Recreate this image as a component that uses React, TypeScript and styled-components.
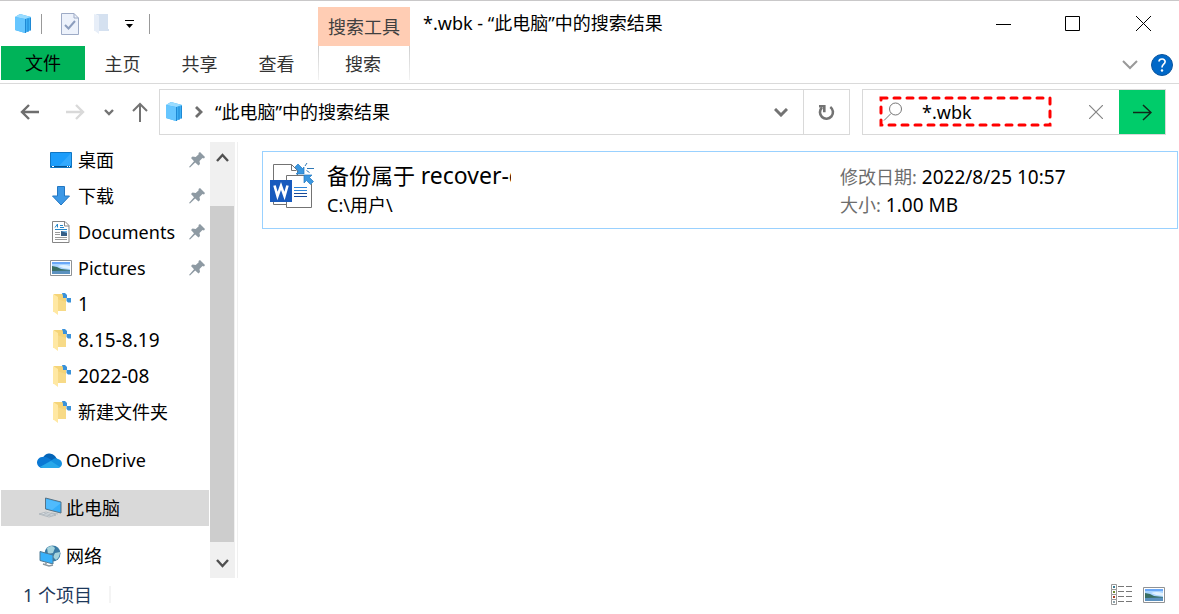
import React from "react";
import styled, { createGlobalStyle } from "styled-components";

const GlobalStyle = createGlobalStyle`
  *, *::before, *::after { box-sizing: border-box; }
  body { margin: 0; background: #fff; }
  body, button, input {
    font-family: "Noto Sans", "Noto Sans CJK SC", sans-serif;
    font-size: 18px;
    line-height: 24px;
    color: #000;
  }
  button { border: 0; padding: 0; background: none; }
  svg { display: block; flex: none; }
`;

const Window = styled.div`
  display: flex;
  flex-direction: column;
  min-height: 100vh;
  background: #fff;
  border-top: 1px solid #c9c8c9;
`;

const TitleBar = styled.header`
  display: flex;
  height: 45px;
`;

const QuickAccess = styled.div`
  display: flex;
  align-items: center;
  width: 318px;
  height: 46px;
  padding-left: 14px;
`;

const Divider = styled.span<{ $before: number; $after: number }>`
  width: 1px;
  height: 20px;
  margin: 0 ${(p) => p.$after}px 0 ${(p) => p.$before}px;
  background: #999;
`;

const IconButton = styled.button<{ $width: number }>`
  display: flex;
  align-items: center;
  justify-content: center;
  flex: none;
  width: ${(p) => p.$width}px;
  align-self: stretch;
`;

const ContextLabel = styled.div`
  width: 92px;
  margin-top: 6px;
  background: #ffcdb4;
  color: #404040;
  text-align: center;
  line-height: 40px;
`;

const Title = styled.h1`
  flex: 1;
  margin: 0;
  padding-left: 13px;
  font-size: 18px;
  font-weight: 400;
  line-height: 44px;
  white-space: nowrap;
`;

const WindowControls = styled.div`
  display: flex;
`;

const TabBar = styled.nav`
  display: flex;
  height: 38px;
  padding: 0 4px 0 1px;
  border-bottom: 1px solid #dadada;
`;

const Tab = styled.button<{ $kind?: "file" | "context" }>`
  width: ${(p) => (p.$kind === "file" ? 84 : p.$kind === "context" ? 92 : 77)}px;
  height: 34px;
  margin-left: ${(p) => (p.$kind === "context" ? 2 : 0)}px;
  padding: ${(p) => (p.$kind === "file" ? "0" : "2px 2px 0 0")};
  background: ${(p) => (p.$kind === "file" ? "#00b359" : "#fff")};
  color: ${(p) => (p.$kind === "file" ? "#000" : "#333")};
  border-style: solid;
  border-color: #d4d4d4;
  border-width: ${(p) => (p.$kind === "context" ? "0 1px" : "0")};
  border-image: ${(p) => (p.$kind === "context" ? "linear-gradient(#ccc, #f4f4f4) 1" : "none")};
`;

const Spacer = styled.span`
  flex: 1;
`;

const AddressRow = styled.div`
  display: flex;
  padding: 5px 13px 6px 12px;
`;

const NavButtons = styled.div`
  display: flex;
  width: 147px;
`;

const AddressBox = styled.div`
  display: flex;
  flex: 1;
  align-items: center;
  height: 46px;
  padding-left: 5px;
  border: 1px solid #d9d9d9;
`;

const Crumb = styled.a`
  color: #000;
  text-decoration: none;
  white-space: nowrap;
`;

const RefreshCell = styled.div`
  display: flex;
  align-self: stretch;
  border-left: 1px solid #d9d9d9;
`;

const SearchBox = styled.form`
  position: relative;
  display: flex;
  align-items: center;
  width: 304px;
  height: 46px;
  margin-left: 12px;
  padding-left: 20px;
  border: 1px solid #d9d9d9;
`;

const SearchInput = styled.input`
  flex: 1;
  min-width: 0;
  padding: 0 0 0 19px;
  border: 0;
  outline: 0;
  background: none;
`;

const Highlight = styled.svg`
  position: absolute;
  left: 16px;
  top: 6px;
  pointer-events: none;
`;

const GoButton = styled(IconButton)`
  background: #00cc6a;
`;

const Body = styled.div`
  display: flex;
  flex: 1;
  padding-top: 1px;
`;

const Sidebar = styled.nav`
  width: 210px;
  padding: 0 1px 4px;
`;

const Group = styled.ul`
  margin: 0 0 12px;
  padding: 0;
  list-style: none;

  &:last-child { margin-bottom: 0; }
`;

const Item = styled.a<{ $root?: boolean; $selected?: boolean }>`
  display: flex;
  align-items: center;
  gap: ${(p) => (p.$root ? 4 : 6)}px;
  height: 36px;
  padding: 0 4px 0 ${(p) => (p.$root ? 36 : 49)}px;
  background: ${(p) => (p.$selected ? "#d9d9d9" : "transparent")};
  color: #000;
  text-decoration: none;
  white-space: nowrap;
`;

const ItemLabel = styled.span<{ $numeric?: boolean }>`
  flex: 1;
  font-size: ${(p) => (p.$numeric ? 19 : 18)}px;
`;

const ScrollBar = styled.div`
  display: flex;
  flex-direction: column;
  width: 25px;
  background: #f0f0f0;
`;

const ScrollButton = styled.button`
  display: flex;
  align-items: center;
  justify-content: center;
  height: 30px;
`;

const ScrollTrack = styled.div`
  display: flex;
  flex: 1;
  padding: 34px 1px 6px 0;
`;

const ScrollThumb = styled.div`
  flex: 1;
  background: #cdcdcd;
`;

const Results = styled.main`
  flex: 1;
  margin-left: 2px;
  padding: 9px 1px 0 24px;
  border-left: 1px solid #f0f0f0;
`;

const Result = styled.article`
  display: flex;
  height: 78px;
  padding: 10px 7px;
  border: 1px solid #99d1ff;
`;

const FileInfo = styled.div`
  flex: 1;
  padding-left: 13px;
`;

const FileName = styled.h2`
  width: 184px;
  height: 28px;
  margin: 0;
  overflow-x: clip;
  overflow-y: visible;
  font-size: 22px;
  font-weight: 400;
  line-height: 26px;
  white-space: nowrap;
`;

const LatinName = styled.span`
  font-size: 23px;
`;

const FilePath = styled.p`
  margin: 0;
  line-height: 30px;
`;

const Details = styled.dl`
  width: 330px;
  margin: 0;
  padding-top: 1px;
`;

const Detail = styled.div`
  display: flex;
  gap: 5px;
  line-height: 28px;

  dt { color: #6d6d6d; }
  dd { margin: 0; font-size: 19px; }
`;

const StatusBar = styled.footer`
  display: flex;
  align-items: center;
  height: 37px;
  padding: 0 7px 4px 23px;
  color: #1e395b;
`;

const StatusDivider = styled.span`
  width: 2px;
  height: 17px;
  margin-left: 17px;
  background: #f4f4f4;
`;

const LibraryIcon = () => (
  <svg width="18" height="22" viewBox="0 0 18 22">
    <path d="M1 4 6 1l11 3v13l-6 3-10-3z" fill="#3db0f5" />
    <path d="M1 4 6 1l11 3-6 2z" fill="#9adcff" />
    <path d="M1 4l10 2v14L1 17z" fill="#66c6ff" />
    <path d="M11.500 6v14M14 5.500v13.500M16.500 5v12.500" stroke="#1c85d0" strokeWidth=".9" />
  </svg>
);

const CheckPageIcon = () => (
  <svg width="18" height="22" viewBox="0 0 18 22" fill="none">
    <path d="M.5 .5h12.500l4.500 4.500v16.500H.5z" fill="#edf2fb" stroke="#9eabc6" />
    <path d="M13 .5v4.500h4.500" stroke="#9eabc6" />
    <path d="m4 12 3.500 3.500L14 8" stroke="#8c9dbd" strokeWidth="2" />
  </svg>
);

const PaleFolderIcon = () => (
  <svg width="15" height="22" viewBox="0 0 15 22">
    <path d="M1 1h13v15h1v2H5V3z" fill="#d5e1f0" />
    <path d="M0 1l5 2v18l-4-3H0z" fill="#e7eef8" />
  </svg>
);

const CustomizeIcon = () => (
  <svg width="9" height="8" viewBox="0 0 9 8">
    <path d="M0 .5h9" stroke="#000" />
    <path d="M1 4h7L4.500 8z" />
  </svg>
);

const Stroke = ({ w, h, d, color, width = 1 }: { w: number; h: number; d: string; color: string; width?: number }) => (
  <svg width={w} height={h} viewBox={`0 0 ${w} ${h}`} fill="none" stroke={color} strokeWidth={width}>
    <path d={d} />
  </svg>
);

const HelpIcon = () => (
  <svg width="22" height="22" viewBox="0 0 22 22">
    <circle cx="11" cy="11" r="10.500" fill="#0068c8" stroke="#0b559e" />
    <path d="M8 7.500C8.300 4 14.300 4.300 14.100 7.800 14 10.300 11 10.300 11 13.500" fill="none" stroke="#fff" strokeWidth="1.700" />
    <circle cx="11" cy="16.500" r="1.200" fill="#fff" />
  </svg>
);

const RefreshIcon = () => (
  <svg width="17" height="17" viewBox="0 0 17 17" fill="none" stroke="#737373" strokeWidth="2.600">
    <path d="M12.300 3A6.500 6.500 0 1 1 4 3.500" />
    <path d="M1 2.200h5.300v6" />
  </svg>
);

const DesktopIcon = () => (
  <svg width="22" height="16" viewBox="0 0 22 16">
    <path d="M.5 .5h21v15H.5z" fill="#1c9dfb" stroke="#0f76c4" />
    <path d="M21 1v12L9 14z" fill="#42b0ff" opacity=".6" />
    <path d="M1 14.500h20" stroke="#07518c" />
    <path d="M2 14.500h2M17 14.500h1M19 14.500h1" stroke="#fff" />
  </svg>
);

const DownloadIcon = () => (
  <svg width="22" height="20" viewBox="0 0 22 20">
    <path d="M7.500 .5h7v9.500h5L11 19 2.500 10h5z" fill="#3c98e6" stroke="#2377c2" />
  </svg>
);

const DocumentIcon = () => (
  <svg width="22" height="22" viewBox="0 0 22 22" fill="none">
    <path d="M2.500 .5H15l4 4v17H2.500z" fill="#fff" stroke="#858585" />
    <path d="M14.500 .5v4.500H19" stroke="#858585" />
    <path d="M5 6.500l2.500-3.500v3.500M10 4.500h3M10 6.500h4M5 8.500h12" stroke="#2687c9" />
    <path d="M5 11.500h5M5 13.500h5M5 16.500h12M5 18.500h12" stroke="#9a9a9a" />
    <path d="M11 10h6v5h-6z" fill="#355e86" />
    <path d="M11 10h6v2l-3-1z" fill="#76b7e8" />
  </svg>
);

const PictureIcon = () => (
  <svg width="22" height="16" viewBox="0 0 22 16">
    <path d="M.5 .5h21v15H.5z" fill="#fff" stroke="#8f9295" />
    <path d="M2 2h18v12H2z" fill="#a9d4ff" />
    <path d="M2 2h18v2H2z" fill="#6aa8f7" />
    <path d="M2 6l5 1 4 2 9 1v1H2z" fill="#386e62" />
    <path d="M2 11l18-.5V14H2z" fill="#5b91bf" />
    <path d="M8 6q5-2 12 0v3q-6 0-12-3z" fill="#e1f2ff" />
  </svg>
);

const FolderIcon = () => (
  <svg width="22" height="22" viewBox="0 0 22 22">
    <path d="M4 1h12v17H6z" fill="#f5d478" />
    <path d="M16 9v9h-9V6z" fill="#f7da87" />
    <path d="M3 1l5 3v18l-4-3H3z" fill="#ffe8a3" />
    <path d="M12 0h3l2 2v3h-4v-2zM16.500 5H21v4.500h-3L16.500 8z" fill="#3a92da" />
  </svg>
);

const CloudIcon = () => (
  <svg width="25" height="17" viewBox="0 0 25 17">
    <path d="M6 6A7 7 0 0 1 18 4l2 3-7 5z" fill="#0364b8" />
    <path d="M6 16A5.500 5.500 0 0 1 5 5q4-1 7 1.500L20 11l-7 5z" fill="#0a78d4" />
    <path d="M15 8q3-3 6-1 4 1 4 5a4.500 4.500 0 0 1-5 4H6l-3-1z" fill="#1490df" />
    <path d="M3 15l11-6 9 6q-1 1-3 1H6z" fill="#28a8ea" />
  </svg>
);

const ComputerIcon = () => (
  <svg width="25" height="22" viewBox="0 0 25 22">
    <path d="M8.500 1l15.500 4v11L8.500 12z" fill="#35aefa" stroke="#577386" />
    <path d="M9 2l15 4-9 7-6-2z" fill="#6bc7ff" opacity=".5" />
    <path d="M2 17l7-2 10 3-7 2z" fill="#e3e8ec" stroke="#a6afb5" strokeWidth=".8" />
    <path d="M4 17l10 2M7 16l9 2.500M14 16l7 1" stroke="#b3bbc1" />
  </svg>
);

const NetworkIcon = () => (
  <svg width="25" height="22" viewBox="0 0 25 22">
    <circle cx="15.500" cy="8.500" r="8" fill="#397ba5" />
    <path d="M10 3q5-4 8 0l-2 5-5 1zM18 8l5-1q0 5-4 8l-3-3z" fill="#a5d3dc" />
    <path d="M3 6.500l13 3.500v9L3 15.500z" fill="#38b1fa" stroke="#4f7a94" />
    <path d="M9 17v2M6 19l6 2 4-1" fill="none" stroke="#8b979f" strokeWidth="1.500" />
  </svg>
);

const PinIcon = () => (
  <svg width="16" height="16" viewBox="0 0 16 16">
    <path d="M9.500 1l1.500-1 5 5-1 1.500-1.500-.5-3 3 .5 3-1.500 1.500-3.300-3L1 15.500l-1-.5 5-5.700L2 6l1.500-1.500 3.200.5 3-2.700z" fill="#8e9aa3" />
  </svg>
);

const WordBackupIcon = () => (
  <svg width="44" height="46" viewBox="0 0 44 46">
    <path d="M3.500 2.500h18l6 6v34h-24z" fill="#fff" stroke="#737373" />
    <path d="M21.500 2.500v6h5" fill="none" stroke="#737373" />
    <path d="M16.500 13.500h19l6 6v26h-25z" fill="#fff" stroke="#737373" />
    <path d="M24 25.500h13M24 28.500h13" stroke="#2f86d8" />
    <path d="M24 31.500h13M24 34.500h13" stroke="#174999" />
    <path d="M34 12h10v10H34z" fill="#fff" />
    <path d="M25 5l3-3 4.500 4.500L34 5v7h-8l2.500-2.500zM34 13h8l-2.500 2.500 4 4-3 3-4-4L34 21z" fill="#3a97e0" stroke="#2479c0" strokeWidth=".7" />
    <path d="M37 6.500h7M35 4l2-3M36.500 8.500l3 2" stroke="#2f78b5" />
    <path d="M0 18h22v22H0z" fill="#185abd" />
    <path d="M4.500 23.500l3 10.500 3.500-10 3.500 10 3-10.500" fill="none" stroke="#fff" strokeWidth="2.600" />
  </svg>
);

const SearchIcon = () => (
  <svg width="20" height="20" viewBox="0 0 20 20" fill="none" stroke="#777">
    <circle cx="12.500" cy="7" r="6" />
    <path d="M8 11.500 1 18.500" />
  </svg>
);

const DetailsViewIcon = () => (
  <svg width="22" height="22" viewBox="0 0 22 22">
    {["#397c93", "#6b8b2e", "#a93c22", "#8ba0a8"].map((color, i) => (
      <g key={color} transform={`translate(0 ${i * 5})`}>
        <path d="M.5 .5h5v5h-5z" fill="#fff" stroke="#999" />
        <path d="M2 2h2v2H2z" fill={color} />
        <path d="M7 2.500h6M15 2.500h6" stroke="#777" />
      </g>
    ))}
  </svg>
);

const pinned = [
  { label: "桌面", icon: <DesktopIcon /> },
  { label: "下载", icon: <DownloadIcon /> },
  { label: "Documents", icon: <DocumentIcon /> },
  { label: "Pictures", icon: <PictureIcon /> },
];
const folders = ["1", "8.15-8.19", "2022-08", "新建文件夹"];
const roots = [
  { label: "OneDrive", icon: <CloudIcon /> },
  { label: "此电脑", icon: <ComputerIcon />, selected: true },
  { label: "网络", icon: <NetworkIcon /> },
];

export default function App() {
  return (
    <>
      <GlobalStyle />
      <Window>
        <TitleBar>
          <QuickAccess>
            <LibraryIcon />
            <Divider $before={9} $after={14} />
            <IconButton $width={28} aria-label="属性"><CheckPageIcon /></IconButton>
            <IconButton $width={34} aria-label="新建文件夹"><PaleFolderIcon /></IconButton>
            <IconButton $width={22} aria-label="自定义快速访问工具栏"><CustomizeIcon /></IconButton>
            <Divider $before={9} $after={0} />
          </QuickAccess>
          <ContextLabel>搜索工具</ContextLabel>
          <Title>*.wbk - “此电脑”中的搜索结果</Title>
          <WindowControls>
            <IconButton $width={70} aria-label="最小化"><Stroke w={15} h={16} d="M0 8.500h15" color="#000" /></IconButton>
            <IconButton $width={69} aria-label="最大化"><Stroke w={15} h={15} d="M.5 .5h14v14H.5z" color="#000" /></IconButton>
            <IconButton $width={72} aria-label="关闭"><Stroke w={15} h={15} d="M0 0l15 15M15 0L0 15" color="#000" /></IconButton>
          </WindowControls>
        </TitleBar>
        <TabBar>
          <Tab $kind="file">文件</Tab>
          <Tab>主页</Tab>
          <Tab>共享</Tab>
          <Tab>查看</Tab>
          <Tab $kind="context">搜索</Tab>
          <Spacer />
          <IconButton $width={38} aria-label="展开功能区"><Stroke w={16} h={10} d="M1 1l7 7 7-7" color="#999" width={2} /></IconButton>
          <IconButton $width={26} aria-label="帮助"><HelpIcon /></IconButton>
        </TabBar>
        <AddressRow>
          <NavButtons>
            <IconButton $width={36} aria-label="后退"><Stroke w={20} h={16} d="M19 8H2M9 1L2 8l7 7" color="#6e6e6e" width={2.4} /></IconButton>
            <IconButton $width={54} aria-label="前进"><Stroke w={20} h={16} d="M1 8h17M11 1l7 7-7 7" color="#d9d9d9" width={2.4} /></IconButton>
            <IconButton $width={14} aria-label="最近位置"><Stroke w={10} h={7} d="M1 1l4 4 4-4" color="#737373" width={2.4} /></IconButton>
            <IconButton $width={48} aria-label="向上"><Stroke w={16} h={20} d="M8 20V2M1 9l7-7 7 7" color="#737373" width={2} /></IconButton>
          </NavButtons>
          <AddressBox>
            <LibraryIcon />
            <IconButton $width={32} aria-label="展开路径"><Stroke w={8} h={12} d="M1 1l5 5-5 5" color="#6e6e6e" width={2.8} /></IconButton>
            <Crumb href="#results">“此电脑”中的搜索结果</Crumb>
            <Spacer />
            <IconButton $width={44} aria-label="以前的位置"><Stroke w={14} h={9} d="M1 1l6 6 6-6" color="#737373" width={3} /></IconButton>
            <RefreshCell>
              <IconButton $width={45} aria-label="刷新"><RefreshIcon /></IconButton>
            </RefreshCell>
          </AddressBox>
          <SearchBox role="search" onSubmit={(e) => e.preventDefault()}>
            <SearchIcon />
            <SearchInput aria-label="搜索" defaultValue="*.wbk" />
            <IconButton $width={46} type="button" aria-label="清除"><Stroke w={14} h={14} d="M0 0l14 14M14 0L0 14" color="#858585" width={1.2} /></IconButton>
            <GoButton $width={46} type="submit" aria-label="转到"><Stroke w={19} h={17} d="M0 8.500h18M10 1l8 7.500-8 7.500" color="#10281a" width={1.5} /></GoButton>
            <Highlight width="173" height="31" viewBox="0 0 173 31" fill="none" stroke="#ff0000" strokeWidth="3" strokeLinecap="round" strokeDasharray="6 7">
              <rect x="2" y="2" width="169" height="27" />
            </Highlight>
          </SearchBox>
        </AddressRow>
        <Body>
          <Sidebar>
            <Group>
              {pinned.map((p) => (
                <li key={p.label}><Item href="#results">{p.icon}<ItemLabel>{p.label}</ItemLabel><PinIcon /></Item></li>
              ))}
              {folders.map((name) => (
                <li key={name}>
                  <Item href="#results"><FolderIcon /><ItemLabel $numeric={/^\d/.test(name)}>{name}</ItemLabel></Item>
                </li>
              ))}
            </Group>
            {roots.map((r) => (
              <Group key={r.label}>
                <li><Item href="#results" $root $selected={r.selected}>{r.icon}<ItemLabel>{r.label}</ItemLabel></Item></li>
              </Group>
            ))}
          </Sidebar>
          <ScrollBar>
            <ScrollButton aria-label="向上滚动"><Stroke w={13} h={9} d="M1 8l5.500-6L12 8" color="#505050" width={2.4} /></ScrollButton>
            <ScrollTrack><ScrollThumb /></ScrollTrack>
            <ScrollButton aria-label="向下滚动"><Stroke w={13} h={9} d="M1 1l5.500 6L12 1" color="#505050" width={2.4} /></ScrollButton>
          </ScrollBar>
          <Results id="results">
            <Result>
              <WordBackupIcon />
              <FileInfo>
                <FileName>备份属于 <LatinName>recover-c</LatinName></FileName>
                <FilePath>C:\用户\</FilePath>
              </FileInfo>
              <Details>
                <Detail><dt>修改日期:</dt><dd>2022/8/25 10:57</dd></Detail>
                <Detail><dt>大小:</dt><dd>1.00 MB</dd></Detail>
              </Details>
            </Result>
          </Results>
        </Body>
        <StatusBar>
          <span>1 个项目</span>
          <StatusDivider />
          <Spacer />
          <IconButton $width={28} aria-label="详细信息"><DetailsViewIcon /></IconButton>
          <IconButton $width={36} aria-label="大图标"><PictureIcon /></IconButton>
        </StatusBar>
      </Window>
    </>
  );
}
